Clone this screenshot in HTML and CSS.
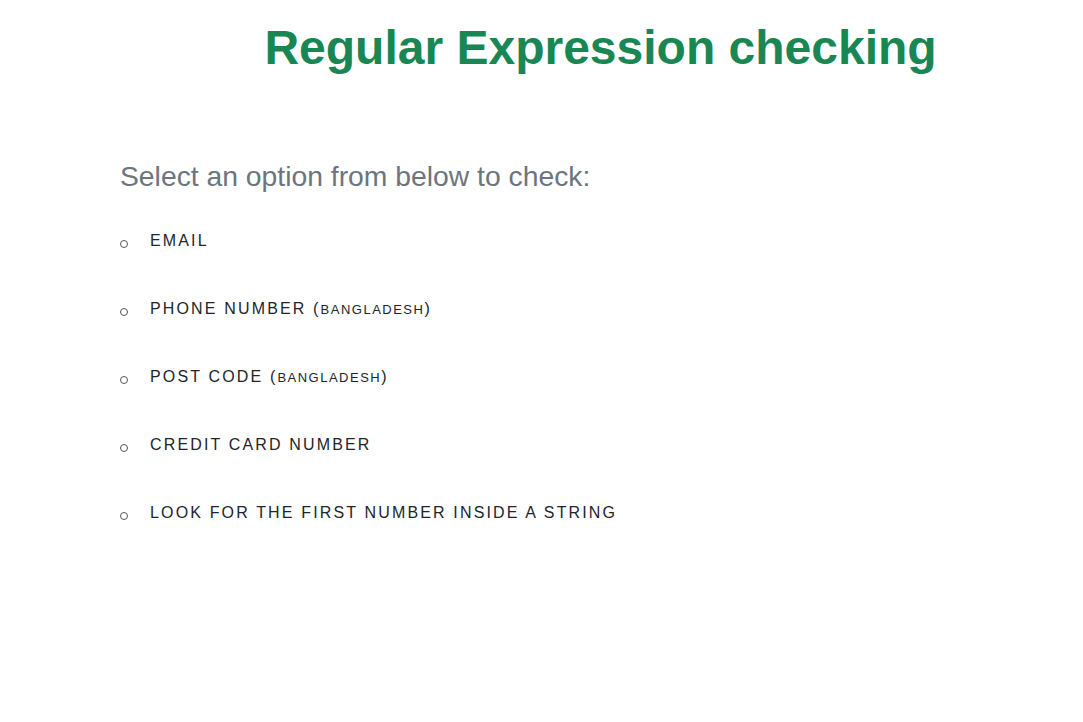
FILE: index.html
```html
<!DOCTYPE html>
<html lang="en">
<head>
  <meta charset="UTF-8" />
  <title>Regular Expression checking</title>
  <link rel="stylesheet" href="styles.css">
</head>
<body>
  <header class="header">
    <h1 class="title">Regular Expression checking</h1>
  </header>

  <main class="content">
    <h2 class="subtitle">Select an option from below to check:</h2>
    <ul class="options">
      <li><a href="#email">Email</a></li>
      <li><a href="#phone">Phone number (<small>Bangladesh</small>)</a></li>
      <li><a href="#post">Post code (<small>Bangladesh</small>)</a></li>
      <li><a href="#card">Credit card number</a></li>
      <li><a href="#number">Look for the first number inside a string</a></li>
    </ul>
  </main>
</body>
</html>
```

FILE: styles.css
```css
:root {
  --green: #198754;
  --muted: #6c757d;
  --text: #212529;
}

* {
  box-sizing: border-box;
  margin: 0;
  padding: 0;
}

body {
  font-family: 'Liberation Sans', Arial, sans-serif;
  background: #ffffff;
  color: var(--text);
}

.header {
  padding: 18px 0 0 118px;
  text-align: center;
}

.title {
  font-size: 48px;
  font-weight: 700;
  line-height: 60px;
  color: var(--green);
}

.content {
  padding: 81px 0 0 120px;
}

.subtitle {
  font-size: 28.3px;
  font-weight: 400;
  line-height: 34px;
  color: var(--muted);
  margin-bottom: 38px;
}

.options {
  list-style: none;
  display: flex;
  flex-direction: column;
  gap: 48px;
}

.options li {
  line-height: 20px;
}

/* small hollow bullet sitting on the baseline */
.options li::before {
  content: '';
  display: inline-block;
  width: 6px;
  height: 6px;
  margin-right: 22px;
  border: 1px solid #555;
  border-radius: 50%;
  vertical-align: -2px;
}

.options a {
  color: var(--text);
  text-decoration: none;
  text-transform: uppercase;
  font-size: 16px;
  letter-spacing: 2.15px;
}

.options small {
  font-size: 13px;
  line-height: 1;
  letter-spacing: 1.5px;
}
```
